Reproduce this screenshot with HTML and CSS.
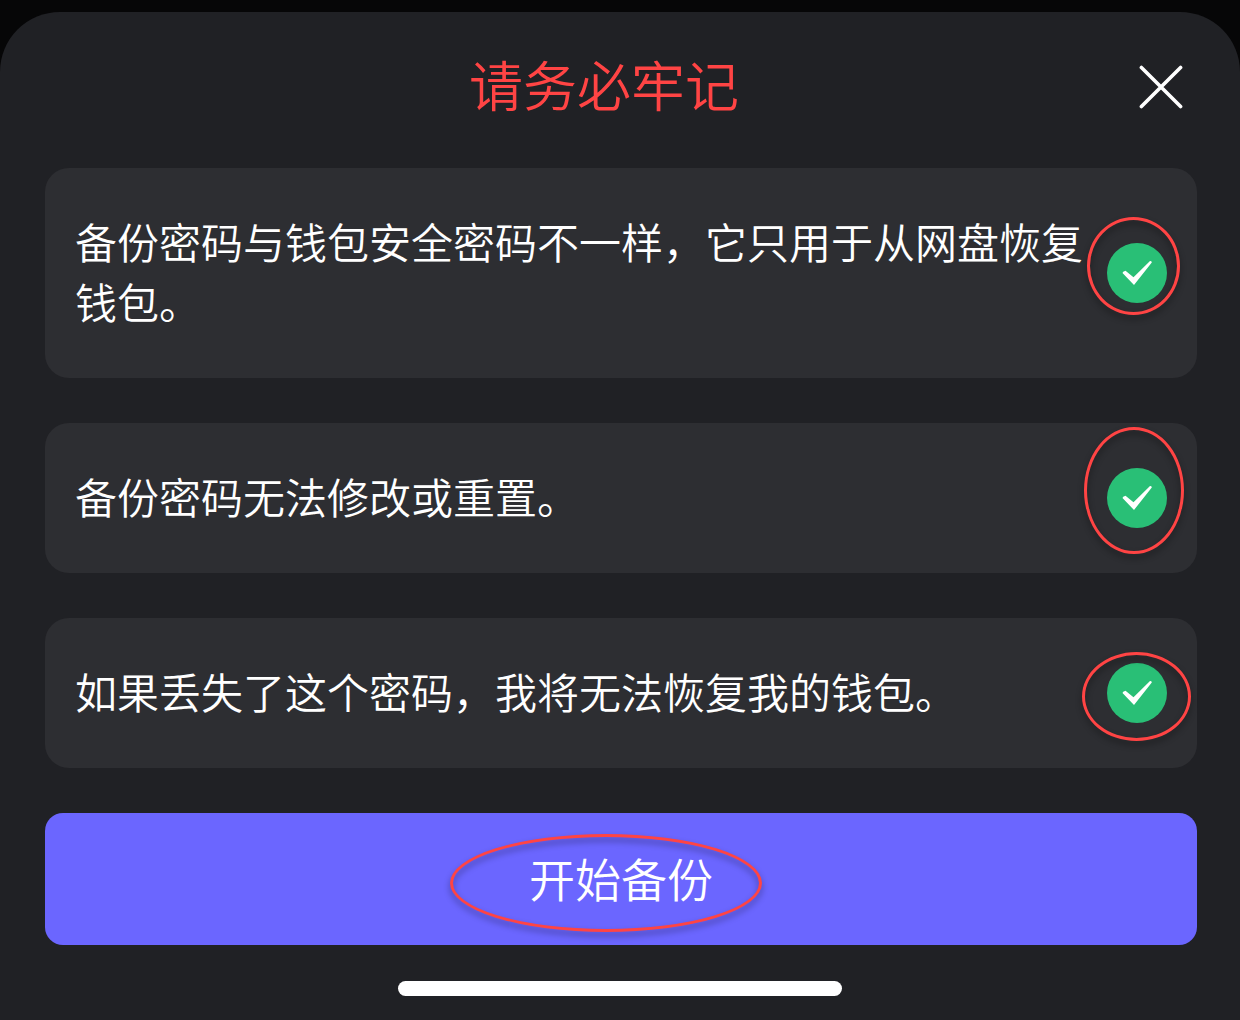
FILE: index.html
```
<!DOCTYPE html>
<html lang="zh-CN">
<head>
    <meta charset="UTF-8">
    <meta name="viewport" content="width=device-width, initial-scale=1.0">
    <title>请务必牢记</title>
    <link rel="stylesheet" href="styles.css">
</head>
<body>
    <main class="sheet">
        <header class="header">
            <h1>请务必牢记</h1>
            <button type="button" class="close-btn" aria-label="关闭">
                <svg width="44" height="44" viewBox="0 0 44 44" fill="none" stroke="#fff" stroke-width="3.6" stroke-linecap="round">
                    <path d="M2.4 2.4 41.6 41.6M41.6 2.4 2.4 41.6"/>
                </svg>
            </button>
        </header>

        <form class="content">
            <div class="notice">
                <label for="differentPassword">备份密码与钱包安全密码不一样，它只用于从网盘恢复钱包。</label>
                <div class="check">
                    <input type="checkbox" id="differentPassword" checked>
                    <svg class="tick" viewBox="0 0 60 60"><path d="M15.5 30Q15.5 28.5 18.5 27.8L26.5 34.2 43 18Q45 17.8 44.8 19.5L27 42Z"/></svg>
                    <span class="ring ring-round"></span>
                </div>
            </div>

            <div class="notice">
                <label for="noReset">备份密码无法修改或重置。</label>
                <div class="check">
                    <input type="checkbox" id="noReset" checked>
                    <svg class="tick" viewBox="0 0 60 60"><path d="M15.5 30Q15.5 28.5 18.5 27.8L26.5 34.2 43 18Q45 17.8 44.8 19.5L27 42Z"/></svg>
                    <span class="ring ring-tall"></span>
                </div>
            </div>

            <div class="notice">
                <label for="noRecovery">如果丢失了这个密码，我将无法恢复我的钱包。</label>
                <div class="check">
                    <input type="checkbox" id="noRecovery" checked>
                    <svg class="tick" viewBox="0 0 60 60"><path d="M15.5 30Q15.5 28.5 18.5 27.8L26.5 34.2 43 18Q45 17.8 44.8 19.5L27 42Z"/></svg>
                    <span class="ring ring-wide"></span>
                </div>
            </div>

            <button type="button" class="start-btn">
                开始备份
                <span class="ring ring-start"></span>
            </button>
        </form>

        <div class="home-bar"></div>
    </main>
</body>
</html>
```
FILE: styles.css
```
* {
    box-sizing: border-box;
}

body {
    margin: 0;
    padding-top: 12px;
    display: flex;
    flex-direction: column;
    min-height: 100vh;
    background: #060607;
    color: #fff;
    font-family: "Noto Sans CJK SC", sans-serif;
    font-weight: 350;
}

.sheet {
    flex: 1;
    padding-bottom: 24px;
    background: #202125;
    border-radius: 60px 60px 0 0;
}

/* Header */
.header {
    display: grid;
    grid-template-columns: 1fr auto 1fr;
    align-items: center;
    height: 150px;
    margin-bottom: 6px;
    padding-right: 32px;
}

.header h1 {
    grid-column: 2;
    margin: 0;
    padding-bottom: 6px;
    color: #ff4444;
    font-size: 54px;
    font-weight: 350;
    line-height: 60px;
}

.close-btn {
    justify-self: end;
    display: flex;
    justify-content: center;
    align-items: center;
    width: 94px;
    height: 94px;
    padding: 0;
    border: none;
    background: none;
    cursor: pointer;
}

/* Notices */
.content {
    display: flex;
    flex-direction: column;
    gap: 45px;
    padding: 0 43px 0 45px;
}

.notice {
    display: flex;
    align-items: center;
    gap: 16px;
    padding: 43px 30px;
    background: #2d2e32;
    border-radius: 24px;
}

.notice label {
    flex: 1;
    padding-bottom: 4px;
    font-size: 42px;
    line-height: 60px;
}

.check {
    position: relative;
    width: 60px;
    height: 60px;
}

.check input {
    appearance: none;
    display: block;
    width: 60px;
    height: 60px;
    margin: 0;
    border-radius: 50%;
    background: #45464b;
    cursor: pointer;
}

.check input:checked {
    background: #29bf76;
}

.tick {
    position: absolute;
    top: 0;
    left: 0;
    width: 60px;
    height: 60px;
    fill: #fff;
    pointer-events: none;
}

/* Red highlight rings */
.ring {
    position: absolute;
    border: 3px solid #ff4444;
    border-radius: 50%;
    filter: drop-shadow(0 4px 3px rgba(0,0,0,0.4));
    pointer-events: none;
}

.ring-round {
    top: -26px;
    left: -20px;
    width: 93px;
    height: 98px;
}

.ring-tall {
    top: -41px;
    left: -23px;
    width: 100px;
    height: 127px;
}

.ring-wide {
    top: -11px;
    left: -25px;
    width: 109px;
    height: 89px;
}

.ring-start {
    top: 21px;
    left: calc(50% - 171px);
    width: 312px;
    height: 98px;
}

/* Footer */
.start-btn {
    position: relative;
    height: 132px;
    padding: 0 0 4px;
    border: none;
    border-radius: 18px;
    background: #6b66ff;
    color: #fff;
    font-family: inherit;
    font-size: 46px;
    font-weight: 350;
    cursor: pointer;
}

.home-bar {
    width: 444px;
    height: 15px;
    margin: 36px auto 0;
    border-radius: 8px;
    background: #fff;
}
```
